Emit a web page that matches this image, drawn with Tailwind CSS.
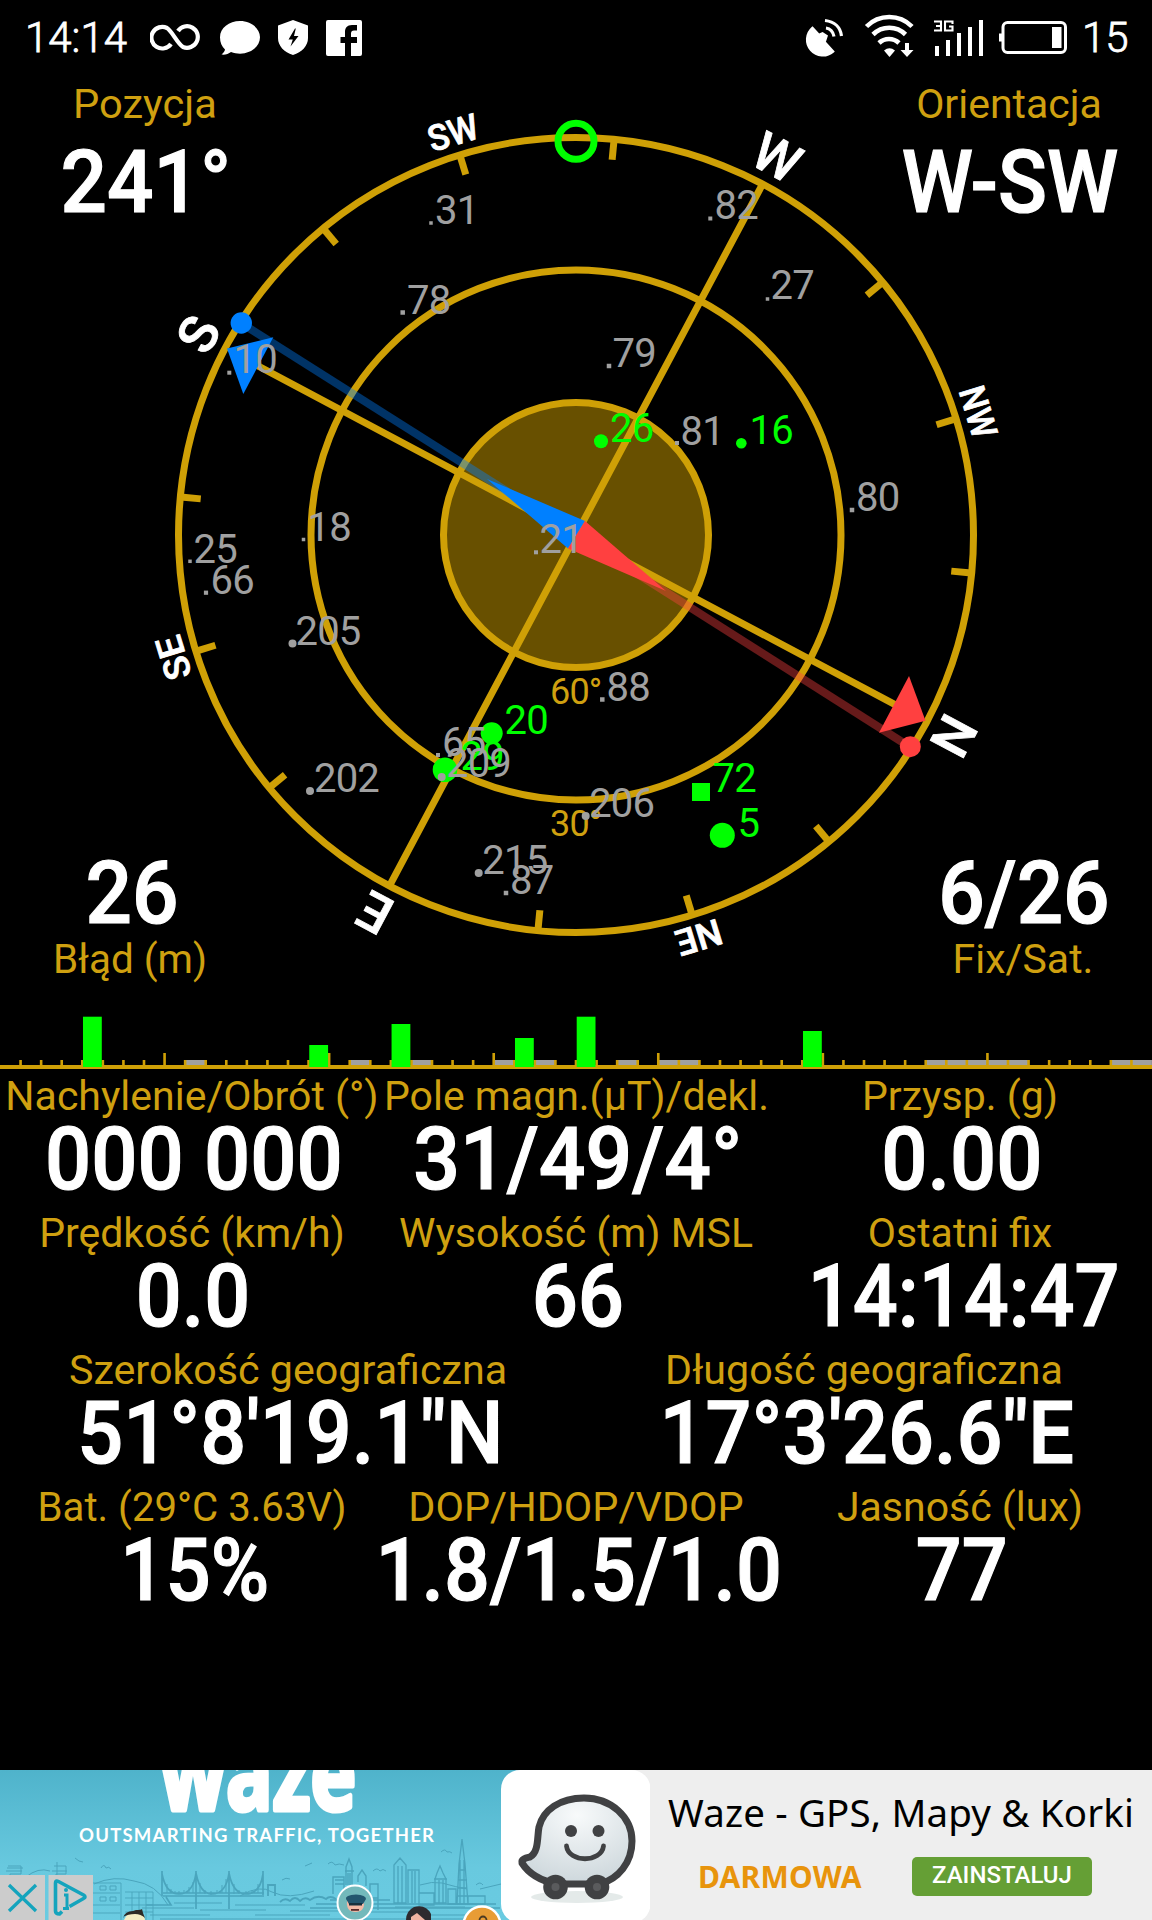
<!DOCTYPE html>
<html lang="pl">
<head>
<meta charset="utf-8">
<title>GPS</title>
<script src="https://cdn.jsdelivr.net/npm/@tailwindcss/browser@4"></script>
</head>
<body class="bg-black">
<div class="w-[1152px] h-[1920px] bg-black overflow-hidden flex flex-col font-['Roboto',sans-serif] text-white">

<!-- Status bar -->
<header class="h-[76px] shrink-0 flex items-center justify-between pl-[25px] pr-[26px] text-[42px] leading-[76px]">
  <div class="flex items-center h-full">
    <span class="w-[125px] font-light [-webkit-text-stroke:0.8px_white]">14:14</span>
    <svg class="w-[220px] h-[76px]" viewBox="150 0 220 76" fill="white">
      <path d="M171 44A10.800 10.800 0 1 1 167 28C172 31 177 43 183 47A10.800 10.800 0 1 0 178 31" fill="none" stroke="white" stroke-width="4.200"/>
      <path d="M240 21c11 0 20 7.200 20 16.200s-9 16.500-20 16.500c-3 0-6-.5-9-1.700-2.500 2-6 3-9.500 2.500 2-1.500 3.300-3.200 3.500-5-3.200-3-5-7.200-5-12.300C220 28 229 21 240 21z"/>
      <path fill-rule="evenodd" d="M293 20l15 5.500V38c0 8-6 14-15 17-9-3-15-9-15-17V25.500zm2 8.500l-6.500 11h4.300l-2.300 7 8-10.500h-4.500l1.800-7.500z"/>
      <path d="M328 20h32a2 2 0 0 1 2 2v32a2 2 0 0 1-2 2h-9V43h6v-6h-6v-3.500c0-2 1-3 3-3h3V25h-5c-5 0-7 3-7 7v5h-4.500v6h4.500v13h-17a2 2 0 0 1-2-2V22a2 2 0 0 1 2-2z"/>
    </svg>
  </div>
  <div class="flex items-center h-full">
    <svg class="w-[266px] h-[76px]" viewBox="802 0 266 76" fill="white">
      <path d="M812.500 28a15.500 15.500 0 0 0 20.500 23.500l-8.500-9.500 2-6-4-2.500-3.500 1.500z" stroke="white" stroke-width="2.500"/>
      <path d="M826 28c4 .5 7 3.500 8 8.500M825 20.500c9.500 1 15.500 7 16.500 15.500" fill="none" stroke="white" stroke-width="3.200"/>
      <g fill="none" stroke="white" stroke-width="4.600"><path d="M866.500 26.500a32 32 0 0 1 45.500 0"/><path d="M873 34.500a23 23 0 0 1 32.500 0"/><path d="M879 43a14.500 14.500 0 0 1 20 0"/></g>
      <path d="M889.500 57l-5.500-6.500q5.500-4.500 11 0z"/>
      <path d="M905 43h4v7h4.500l-6.500 7-6.500-7h4.500z"/>
      <path d="M934 21.500h7v9h-7M936 26h5M952.500 24v-2.500h-7.500v9h7.500v-4h-3.500" fill="none" stroke="white" stroke-width="2.100"/>
      <path d="M935 46h4v10h-4zM946 40h4v16h-4zM957 33h4v23h-4zM968 27h4v29h-4zM979 20h4v36h-4z"/>
      <rect x="1003" y="22.500" width="62.500" height="30" rx="4.500" fill="none" stroke="white" stroke-width="3"/>
      <rect x="999" y="33.500" width="3" height="8"/><rect x="1052" y="27" width="9.500" height="21"/>
    </svg>
    <span class="w-[44px] ml-[14px] font-light [-webkit-text-stroke:0.8px_white]">15</span>
  </div>
</header>

<!-- Compass with the satellites in view -->
<section class="relative h-[936px] shrink-0 flex flex-col justify-between">
  <svg class="absolute inset-0 w-[1152px] h-[936px]" viewBox="0 76 1152 936">
    <g fill="none" stroke="#cfa006" stroke-width="7">
      <circle cx="576" cy="535" r="132.500" fill="#685000"/>
      <circle cx="576" cy="535" r="265"/>
      <circle cx="576" cy="535" r="397.500"/>
      <g transform="translate(576 535) rotate(28)">
        <path d="M0-397V397M-363 0H363"/>
        <g id="tk"></g>
      </g>
    </g>
    <g fill="white" stroke="white" stroke-width=".8" font-weight="500" text-anchor="middle" transform="translate(576 535)">
      <g font-size="53">
        <text transform="rotate(28)" y="-409" textLength="46" lengthAdjust="spacingAndGlyphs">W</text>
        <text transform="rotate(118)" y="-409">N</text>
        <text transform="rotate(208)" y="-409">E</text>
        <text transform="rotate(298)" y="-409">S</text>
      </g>
      <g font-size="36">
        <text transform="rotate(-17)" y="-408" textLength="51" lengthAdjust="spacingAndGlyphs">SW</text>
        <text transform="rotate(73)" y="-408" textLength="52" lengthAdjust="spacingAndGlyphs">NW</text>
        <text transform="rotate(163)" y="-408" textLength="46" lengthAdjust="spacingAndGlyphs">NE</text>
        <text transform="rotate(253)" y="-408" textLength="44" lengthAdjust="spacingAndGlyphs">SE</text>
      </g>
    </g>
    <g fill="#cfa010" font-size="36" letter-spacing="-.8"><text x="550" y="703.500">60°</text><text x="550" y="835.500">30°</text></g>
    <path d="M241 323L576 535" stroke="#0080ff" stroke-opacity=".4" stroke-width="8"/>
    <path d="M910 747L576 535" stroke="#ff4040" stroke-opacity=".4" stroke-width="8"/>
    <path d="M585 521L568 548.500 487 479z" fill="#0080ff"/>
    <path d="M585 521L568 548.500 666 591z" fill="#ff4040"/>
    <circle cx="241.300" cy="323" r="10.700" fill="#0080ff"/><circle cx="910.300" cy="746.700" r="10.500" fill="#ff4040"/>
    <path d="M273.300 337.300L227 348.500 243.300 394z" fill="#0080ff"/>
    <path d="M909 676L925.500 720.700 879 732.700z" fill="#ff4040"/>
    <circle cx="576" cy="141.300" r="18" fill="none" stroke="#00ff00" stroke-width="7"/>
    <g id="sats" font-size="40" letter-spacing="-.8"></g>
  </svg>
  <div class="relative flex justify-between pt-[4px] text-center">
    <div class="w-[290px]">
      <div class="text-[41px] leading-[48px] text-[#cfa010] scale-x-[1.015]">Pozycja</div>
      <div class="mt-[15px] pl-[2px] text-[87px] leading-[79px] font-medium [-webkit-text-stroke:1.2px_white] scale-x-[.94]">241°</div>
    </div>
    <div class="w-[286px]">
      <div class="text-[41px] leading-[48px] text-[#cfa010]">Orientacja</div>
      <div class="mt-[15px] pl-[2px] text-[87px] leading-[79px] font-medium [-webkit-text-stroke:1.2px_white] scale-x-[.93]">W-SW</div>
    </div>
  </div>
  <div class="relative flex justify-between pb-[29px] text-center">
    <div class="w-[262px]">
      <div class="mb-[2px] mt-[2px] pl-[2px] text-[87px] leading-[79px] font-medium [-webkit-text-stroke:1.2px_white] scale-x-[.94]">26</div>
      <div class="pr-[2px] text-[41px] leading-[48px] text-[#cfa010] scale-x-[.985]">Błąd (m)</div>
    </div>
    <div class="w-[258px]">
      <div class="mb-[2px] mt-[2px] pl-[2px] text-[87px] leading-[79px] font-medium [-webkit-text-stroke:1.2px_white] scale-x-[.94]">6/26</div>
      <div class="text-[41px] leading-[48px] text-[#cfa010]">Fix/Sat.</div>
    </div>
  </div>
</section>

<!-- Signal strength -->
<svg id="sig" class="w-[1152px] h-[60px] shrink-0" viewBox="0 1012 1152 60"></svg>

<!-- Readings -->
<section class="flex flex-col text-center gap-[10px] h-[698px] shrink-0 whitespace-nowrap">
  <div class="grid grid-cols-3">
    <div><div class="text-[41px] leading-[48px] text-[#cfa010]">Nachylenie/Obrót (°)</div><div class="pl-[4px] text-[87px] leading-[79px] font-medium [-webkit-text-stroke:1.2px_white] scale-x-[.935]">000 000</div></div>
    <div><div class="text-[41px] leading-[48px] text-[#cfa010]">Pole magn.(µT)/dekl.</div><div class="pl-[4px] text-[87px] leading-[79px] font-medium [-webkit-text-stroke:1.2px_white] scale-x-[.945]">31/49/4°</div></div>
    <div><div class="text-[41px] leading-[48px] text-[#cfa010]">Przysp. (g)</div><div class="pl-[4px] text-[87px] leading-[79px] font-medium [-webkit-text-stroke:1.2px_white] scale-x-[.935]">0.00</div></div>
  </div>
  <div class="grid grid-cols-3">
    <div><div class="text-[41px] leading-[48px] text-[#cfa010]">Prędkość (km/h)</div><div class="pl-[2px] text-[87px] leading-[79px] font-medium [-webkit-text-stroke:1.2px_white] scale-x-[.93]">0.0</div></div>
    <div><div class="text-[41px] leading-[48px] text-[#cfa010]">Wysokość (m) MSL</div><div class="pl-[4px] text-[87px] leading-[79px] font-medium [-webkit-text-stroke:1.2px_white] scale-x-[.935]">66</div></div>
    <div><div class="text-[41px] leading-[48px] text-[#cfa010]">Ostatni fix</div><div class="pl-[8px] text-[87px] leading-[79px] font-medium [-webkit-text-stroke:1.2px_white] scale-x-[.91]">14:14:47</div></div>
  </div>
  <div class="grid grid-cols-2">
    <div><div class="text-[41px] leading-[48px] text-[#cfa010] scale-x-[1.005]">Szerokość geograficzna</div><div class="pl-[5px] text-[87px] leading-[79px] font-medium [-webkit-text-stroke:1.2px_white] scale-x-[.93]">51°8'19.1"N</div></div>
    <div><div class="text-[41px] leading-[48px] text-[#cfa010] scale-x-[1.005]">Długość geograficzna</div><div class="pl-[6px] text-[87px] leading-[79px] font-medium [-webkit-text-stroke:1.2px_white] scale-x-[.93]">17°3'26.6"E</div></div>
  </div>
  <div class="grid grid-cols-3">
    <div><div class="text-[41px] leading-[48px] text-[#cfa010] scale-x-[.98]">Bat. (29°C 3.63V)</div><div class="pl-[6px] text-[87px] leading-[79px] font-medium [-webkit-text-stroke:1.2px_white] scale-x-[.914]">15%</div></div>
    <div><div class="text-[41px] leading-[48px] text-[#cfa010] scale-x-[1.01]">DOP/HDOP/VDOP</div><div class="-mx-8 pl-[6px] text-[87px] leading-[79px] font-medium [-webkit-text-stroke:1.2px_white] scale-x-[.93]">1.8/1.5/1.0</div></div>
    <div><div class="text-[41px] leading-[48px] text-[#cfa010]">Jasność (lux)</div><div class="pl-[4px] text-[87px] leading-[79px] font-medium [-webkit-text-stroke:1.2px_white] scale-x-[.93]">77</div></div>
  </div>
</section>

<!-- Advertisement -->
<footer class="h-[150px] shrink-0 flex bg-[#eeeeee]">
  <svg class="w-[501px] h-[150px] shrink-0 overflow-visible" viewBox="0 1770 501 150">
    <defs>
      <linearGradient id="sky" x2="0" y2="1"><stop offset="0" stop-color="#4fb3cb"/><stop offset=".65" stop-color="#68c9df"/><stop offset="1" stop-color="#6acbe1"/></linearGradient>
      <clipPath id="ad"><rect y="1770" width="530" height="150"/></clipPath>
    </defs>
    <rect y="1770" width="530" height="150" fill="url(#sky)"/>
    <g clip-path="url(#ad)">
      <g fill="none" stroke="#4aa5bd" stroke-width="1">
        <path d="M75 1858l4 3 4 1M101 1868q3-5 5 0 3-2 5 1M305 1866l7-3M328 1864q4-4 7 1 4-2 9 0M373 1871q4-4 7 0 3-3 6 0M441 1852q4-4 6 0 3-1 5 1M282 1880q4-3 8-1M476 1885q4-4 7 0"/>
        <path d="M6 1871h16M8 1866h13v8h-11v12M7 1868h16M52 1871h15M54 1866h12v8h-10v4M57 1862v24M26 1877q12-10 24-6M94 1884q20-9 40-3 22 3 34 24M240 1896q20-12 32-4 16 8 42-1M420 1885q12-4 22-2 14 4 25 6M480 1889l21-5"/>
        <path d="M93 1883h28v38M93 1893h27M93 1905h27M93 1913h27M125 1892h28v28M125 1898h28M125 1905h28M125 1912h28M132 1892v28M139 1892v28M146 1892v28" stroke-opacity=".9"/>
        <path d="M100 1886h6v4h-6zM110 1886h6v4h-6zM100 1897h6v4h-6zM110 1897h6v4h-6z"/>
        <path d="M162 1871v25M196 1871v38M229 1871v38M263 1871v24M162 1874q4 20 17 20 14 0 17-21 4 21 16 21 14 0 17-21 4 21 17 21 14 0 17-20M163 1893h101M163 1896h101M166 1897l5 8h-25" stroke-width="1.700"/>
        <path d="M167 1884v9M171 1889v4M175 1891v3M179 1891v3M184 1890v4M189 1887v6M193 1882v11M200 1883v10M205 1890v4M211 1891v4M217 1890v4M222 1885v8M226 1879v14M234 1884v10M239 1890v4M246 1891v3M252 1890v4M258 1884v9"/>
        <path d="M142 1908h52M174 1903h48M200 1910h66M235 1905h70M290 1911h55M150 1915h60M255 1915h75M370 1912h40M395 1907h70M425 1915h50M160 1919h340"/>
        <path d="M268 1896v-11h7v11M280 1902q5-5 10-1 5-6 10 0 5-5 10-1 8-6 16-1 4-4 10 0" stroke-width="1.800"/>
        <path d="M333 1894v-17h11v17M346 1885v-18l3-8 3 8v18M345 1871h9M358 1882v-6l4-6 4 6v10M370 1884h8v14h-8zM378 1892v18M335 1880h9M335 1884h9M348 1873v12M350 1873v12" stroke-width="1.400"/>
        <path d="M394 1903v-38l6-7 6 7v38zM398 1866v37M402 1866v37M408 1903v-33h11v33M412 1871v32M415 1871v32M435 1903v-24l2-6 3-7 3 7 3 6v24zM439 1880v24M443 1880v24M434 1879h13M419 1893h15v12h-15zM457 1904l2-40 3-25 3 25 3 40zM459 1870h7M458 1880h9M458 1888h9M458 1896h10M460 1860v44M464 1860v44M448 1889h8v15h-8zM468 1896h17v8h-17z" stroke-width="1.300"/>
        <path d="M310 1908h190M316 1904h180M330 1900h60" stroke-width="1.600"/>
      </g>
      <text x="161" y="1812" font-family="Open Sans" font-weight="700" font-size="102" textLength="194" lengthAdjust="spacingAndGlyphs" fill="#2f8397" fill-opacity=".55">waze</text>
      <text x="160" y="1810" font-family="Open Sans" font-weight="700" font-size="102" textLength="196" lengthAdjust="spacingAndGlyphs" fill="white" stroke="white" stroke-width="5" stroke-linejoin="round">waze</text>
      <text x="79" y="1842" font-family="Lato" font-weight="700" font-size="18.500" textLength="355" fill="white">OUTSMARTING TRAFFIC, TOGETHER</text>
      <circle cx="355" cy="1903" r="17.500" fill="#73b9bb" stroke="white" stroke-width="2"/>
      <path d="M347 1901h17q1 11-8.500 11t-8.500-11z" fill="#f2b9a5"/><path d="M346 1899q-1-4 10-4.500 10 .5 10 4.500l-3 5h-14z" fill="#23566e"/><path d="M349 1903h13v2.500h-13z" fill="#17303d"/><path d="M351 1909h8v1.800h-8z" fill="#5a2b2b"/>
      <path d="M124 1920q2-8 14-9 6 1 7 9z" fill="#f3edc4"/><path d="M123 1918q2-7 10-7l3-1q5 0 6-1l1 4 2 5q-4-4-10-4-7 0-12 3z" fill="#2c2a26"/>
      <path d="M406 1920q0-9 8-13 12-3 17 7v6z" fill="#2d2a2e"/><path d="M411 1920v-3l6-4 8 7z" fill="#f0b3a2"/>
      <circle cx="482" cy="1925" r="18.500" fill="#e89c35" stroke="white" stroke-width="2.500"/><circle cx="483" cy="1920" r="3.500" fill="none" stroke="#4c3a22" stroke-width="1.800"/>
      <rect y="1875" width="45" height="45" fill="#cccccc"/><rect x="48.500" y="1875" width="44.500" height="45" fill="#cccccc"/>
      <path d="M9 1885l27 26M36 1885l-27 26" stroke="#14a4bd" stroke-width="3.300"/>
      <path d="M62 1911.500l-2.500 2.500q-4 0-4-3v-28q0-3 3-1.500l25 13.500q3 2 0 3.500l-14 8" fill="none" stroke="#14a4bd" stroke-width="3.600"/>
      <path d="M64 1895h3v13M63 1908.500h6" fill="none" stroke="#14a4bd" stroke-width="3"/><circle cx="66" cy="1890" r="2" fill="#14a4bd"/>
    </g>
  </svg>
  <svg class="relative w-[149px] h-[150px] shrink-0" viewBox="501 1770 149 150">
    <defs><radialGradient id="face" cx=".5" cy=".2" r=".9"><stop offset="0" stop-color="#f8fafb"/><stop offset="1" stop-color="#c8d3d8"/></radialGradient></defs>
    <rect x="520" y="1770" width="131" height="150" fill="#eeeeee"/>
    <rect x="501" y="1770" width="149.500" height="153" rx="19" fill="white"/>
    <ellipse cx="577" cy="1897" rx="46" ry="6" fill="#e4eae9"/>
    <path d="M584 1798c27 0 48 19 48 43 0 22-14 38-32 43h-43c-16-3-28-10-35-21-1-4 4-5 8-6 9-5 7-20 9-30 4-17 21-29 45-29z" fill="url(#face)" stroke="#404143" stroke-width="7"/>
    <circle cx="555.500" cy="1887" r="12.300" fill="#404143"/><circle cx="597" cy="1887" r="12.300" fill="#404143"/>
    <circle cx="555.500" cy="1887" r="4" fill="#5a5b5d"/><circle cx="597" cy="1887" r="4" fill="#5a5b5d"/>
    <circle cx="571" cy="1831" r="6" fill="#404143"/><circle cx="598.500" cy="1831" r="6" fill="#404143"/>
    <path d="M566.500 1846c2 17 35 17 37 0" fill="none" stroke="#404143" stroke-width="4.800" stroke-linecap="round"/>
  </svg>
  <div class="flex-1 pl-[18px] pt-[16px] text-black font-['Noto_Sans',sans-serif] whitespace-nowrap">
    <div class="text-[38.500px] leading-[52px] tracking-[0.15px]">Waze - GPS, Mapy &amp; Korki</div>
    <div class="flex items-center mt-[19px] h-[39px]">
      <span class="ml-[30px] w-[214px] text-[30px] font-bold tracking-[0.25px] text-[#e8940c]">DARMOWA</span>
      <span class="w-[180px] h-[39px] rounded-[5px] bg-[#659f35] text-white text-center font-['Roboto',sans-serif] font-medium text-[24px] leading-[37px]">ZAINSTALUJ</span>
    </div>
  </div>
</footer>
</div>

<script>
const G = '#00ff00', D = '#a0a0a0';
// Sixteen compass marks, one every 22.5 degrees; quarters are the full axes.
let ticks = '';
for (let i = 0; i < 16; i++) if (i % 4) ticks += `<path d="M0-397V-377" transform="rotate(${i * 22.5})"/>`;
document.getElementById('tk').innerHTML = ticks;

// [label, text x, baseline, marker x, marker y, marker size, shape, colour]
const sats = [
  [31,435,224.3,431,223,3.5,'s',D],[78,407,313.5,402.7,312.5,4.5,'s',D],[10,233.5,372.7,229.3,372.7,4,'s',D],
  [82,714.5,219,710.3,218.5,4,'s',D],[27,770.5,299,767.5,299,3.5,'s',D],[79,612.5,367,609,366,4.5,'s',D],
  [26,610,442,601,441.3,7,'c',G],[81,680.5,444.5,677,443,4,'s',D],[16,749.5,443.5,741.3,443.3,5.3,'c',G],
  [80,856,511.2,852,510,4.5,'s',D],[18,307.5,540.5,303.5,539.5,3.5,'s',D],[25,193.5,562.8,190,561.3,3.5,'s',D],
  [66,210.5,594,206,592.7,4.2,'s',D],[205,295.5,644.5,292.5,643.5,4,'c',D],[21,539.5,553,536,552.3,4,'s',D],
  [88,606.5,700.5,602.3,699.5,4.5,'s',D],[20,504.5,734,491.7,733.3,11,'c',G],[65,442,755.5,438,755,4,'s',D],
  [29,460.5,770,445,769.7,12.3,'c',G],[209,446,776.7,441.7,777,4,'c',D],[202,314,792.2,310,791,4,'c',D],
  [206,589.2,816.5,585.7,816,4,'c',D],[215,482.3,873.7,478.7,873,4,'c',D],[87,510,893.8,506,893,4.5,'s',D],
  [72,712.5,792,701,792,18,'s',G],[5,737.5,837,722.3,835.3,12.5,'c',G]
];
document.getElementById('sats').innerHTML = sats.map(([n, x, y, mx, my, r, k, c]) =>
  (k === 'c' ? `<circle cx="${mx}" cy="${my}" r="${r}" fill="${c}"/>` : `<rect x="${mx - r / 2}" y="${my - r / 2}" width="${r}" height="${r}" fill="${c}"/>`) +
  `<text x="${x}" y="${y}" fill="${c}">${n}</text>`).join('');

const step = 1152 / 56;
let s = '';
for (const i of [9,17,20,24,26,30,32,33,45,46,47,48,49,54,55]) s += `<rect x="${i * step}" y="1060" width="20.500" height="5" fill="${D}"/>`;
for (let i = 1; i < 56; i++) s += `<rect x="${i * step - 1.3}" y="${i % 8 ? 1060 : 1053}" width="2.600" height="${i % 8 ? 6 : 13}" fill="#cfa006"/>`;
s += '<rect y="1065" width="1152" height="4" fill="#cfa006"/>';
for (const [i, y] of [[4,1016.7],[15,1045],[19,1024],[25,1038],[28,1016.7],[39,1031]]) s += `<rect x="${i * step + .7}" y="${y}" width="18.800" height="${1067 - y}" fill="${G}"/>`;
document.getElementById('sig').innerHTML = s;
</script>
</body>
</html>
